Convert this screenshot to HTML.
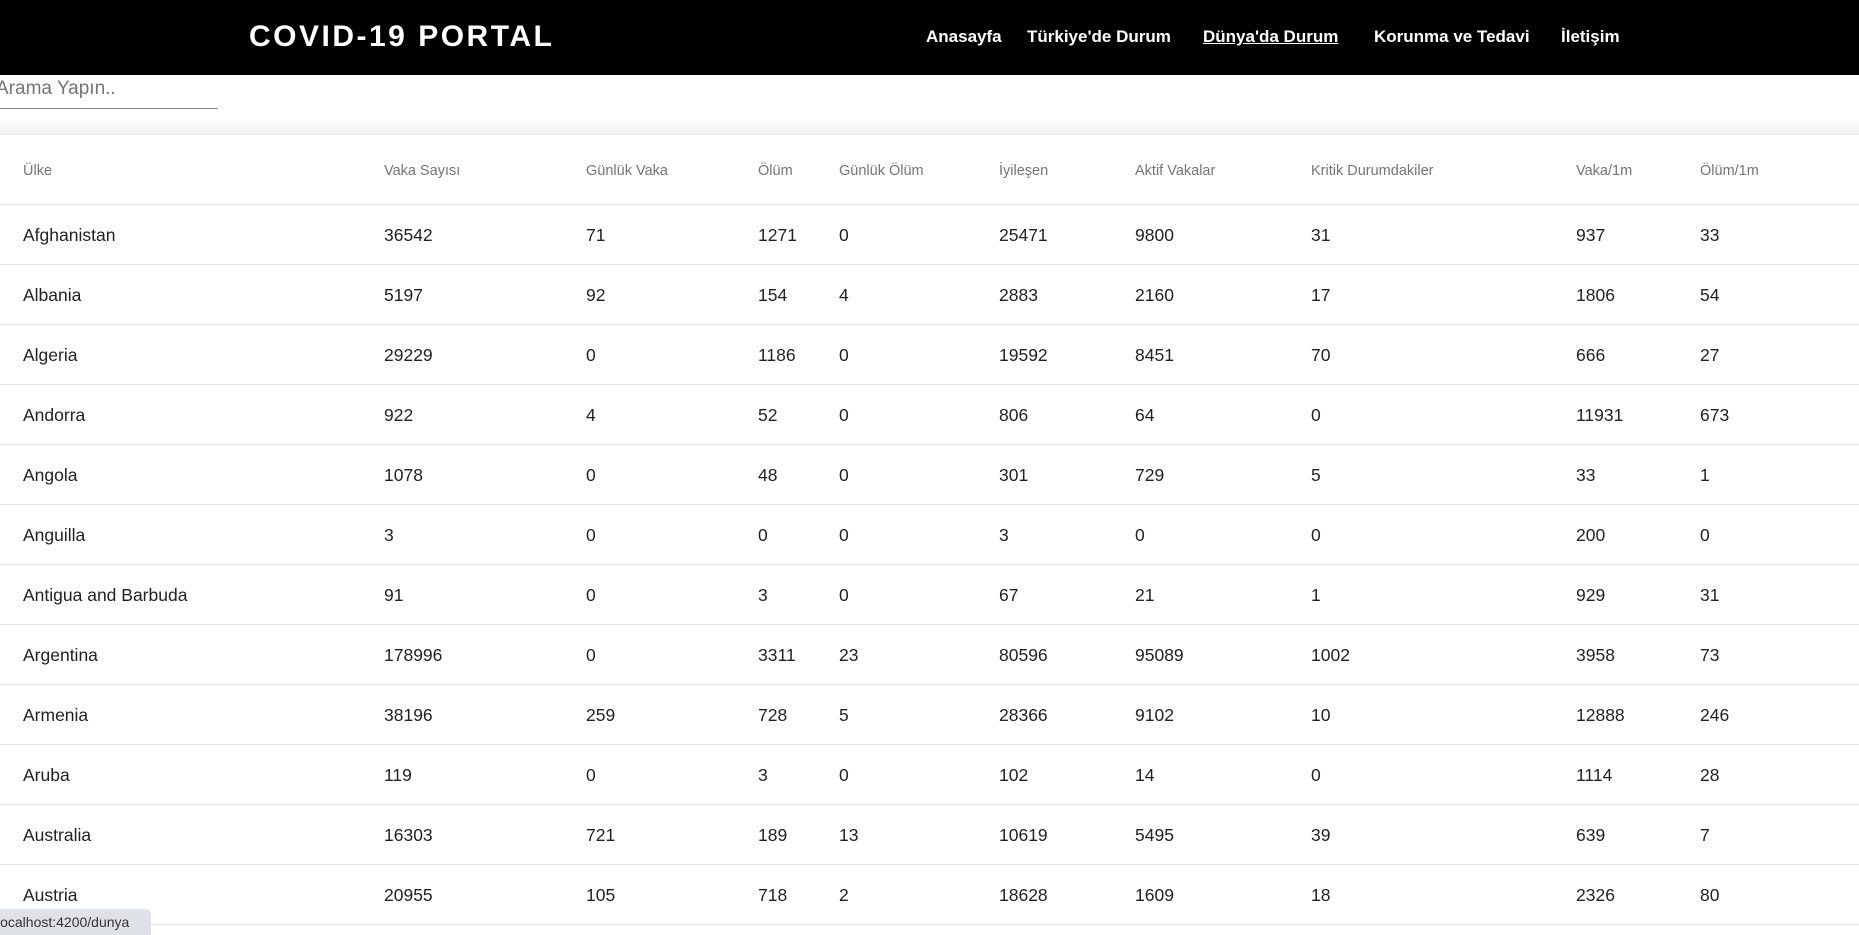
<!DOCTYPE html>
<html><head><meta charset="utf-8"><style>
*{margin:0;padding:0;box-sizing:border-box}
body{width:1859px;height:935px;overflow:hidden;background:#fff;font-family:"Liberation Sans",sans-serif;position:relative}
.hdr{position:absolute;left:0;top:0;width:1859px;height:75px;background:#000}
.title{position:absolute;left:249px;top:20px;color:#fff;font-weight:bold;font-size:30px;letter-spacing:2.5px}
.nav{position:absolute;top:27px;color:#fff;font-weight:bold;font-size:17px;white-space:nowrap}
.search{position:absolute;left:-4px;top:78px;font-size:19px;color:#757575}
.sline{position:absolute;left:0;top:108px;width:218px;height:1px;background:#888}
.shadow{position:absolute;left:0;top:120px;width:1859px;height:15px;background:linear-gradient(#fff,#eee)}
.card{position:absolute;left:0;top:135px;width:1859px;height:800px;background:#fff}
.row{position:absolute;left:0;width:1859px;border-bottom:1px solid #e0e0e0}
.row span{position:absolute;white-space:nowrap}
.h span{font-size:14.5px;color:#757575;top:28px}
.d span{font-size:17.5px;color:#222;top:20px}
.status{position:absolute;left:0;top:909px;width:151px;height:26px;background:#dee1e6;border-top-right-radius:6px;font-size:14px;color:#333;padding:5px 0 0 0;text-indent:-3px;overflow:hidden;white-space:nowrap}
</style></head><body>
<div class="hdr">
<div class="title">COVID-19 PORTAL</div>
<div class="nav" style="left:926px">Anasayfa</div>
<div class="nav" style="left:1027px">Türkiye'de Durum</div>
<div class="nav" style="left:1203px;text-decoration:underline">Dünya'da Durum</div>
<div class="nav" style="left:1374px">Korunma ve Tedavi</div>
<div class="nav" style="left:1561px">İletişim</div>
</div>
<div class="search">Arama Yapın..</div>
<div class="sline"></div>
<div class="shadow"></div>
<div class="card"></div>
<div class="row h" style="top:135px;height:70px">
<span style="left:23px">Ülke</span><span style="left:384px">Vaka Sayısı</span><span style="left:586px">Günlük Vaka</span><span style="left:758px">Ölüm</span><span style="left:839px">Günlük Ölüm</span><span style="left:999px">İyileşen</span><span style="left:1135px">Aktif Vakalar</span><span style="left:1311px">Kritik Durumdakiler</span><span style="left:1576px">Vaka/1m</span><span style="left:1700px">Ölüm/1m</span>
</div>
<div class="row d" style="top:205px;height:60px"><span style="left:23px">Afghanistan</span><span style="left:384px">36542</span><span style="left:586px">71</span><span style="left:758px">1271</span><span style="left:839px">0</span><span style="left:999px">25471</span><span style="left:1135px">9800</span><span style="left:1311px">31</span><span style="left:1576px">937</span><span style="left:1700px">33</span></div>
<div class="row d" style="top:265px;height:60px"><span style="left:23px">Albania</span><span style="left:384px">5197</span><span style="left:586px">92</span><span style="left:758px">154</span><span style="left:839px">4</span><span style="left:999px">2883</span><span style="left:1135px">2160</span><span style="left:1311px">17</span><span style="left:1576px">1806</span><span style="left:1700px">54</span></div>
<div class="row d" style="top:325px;height:60px"><span style="left:23px">Algeria</span><span style="left:384px">29229</span><span style="left:586px">0</span><span style="left:758px">1186</span><span style="left:839px">0</span><span style="left:999px">19592</span><span style="left:1135px">8451</span><span style="left:1311px">70</span><span style="left:1576px">666</span><span style="left:1700px">27</span></div>
<div class="row d" style="top:385px;height:60px"><span style="left:23px">Andorra</span><span style="left:384px">922</span><span style="left:586px">4</span><span style="left:758px">52</span><span style="left:839px">0</span><span style="left:999px">806</span><span style="left:1135px">64</span><span style="left:1311px">0</span><span style="left:1576px">11931</span><span style="left:1700px">673</span></div>
<div class="row d" style="top:445px;height:60px"><span style="left:23px">Angola</span><span style="left:384px">1078</span><span style="left:586px">0</span><span style="left:758px">48</span><span style="left:839px">0</span><span style="left:999px">301</span><span style="left:1135px">729</span><span style="left:1311px">5</span><span style="left:1576px">33</span><span style="left:1700px">1</span></div>
<div class="row d" style="top:505px;height:60px"><span style="left:23px">Anguilla</span><span style="left:384px">3</span><span style="left:586px">0</span><span style="left:758px">0</span><span style="left:839px">0</span><span style="left:999px">3</span><span style="left:1135px">0</span><span style="left:1311px">0</span><span style="left:1576px">200</span><span style="left:1700px">0</span></div>
<div class="row d" style="top:565px;height:60px"><span style="left:23px">Antigua and Barbuda</span><span style="left:384px">91</span><span style="left:586px">0</span><span style="left:758px">3</span><span style="left:839px">0</span><span style="left:999px">67</span><span style="left:1135px">21</span><span style="left:1311px">1</span><span style="left:1576px">929</span><span style="left:1700px">31</span></div>
<div class="row d" style="top:625px;height:60px"><span style="left:23px">Argentina</span><span style="left:384px">178996</span><span style="left:586px">0</span><span style="left:758px">3311</span><span style="left:839px">23</span><span style="left:999px">80596</span><span style="left:1135px">95089</span><span style="left:1311px">1002</span><span style="left:1576px">3958</span><span style="left:1700px">73</span></div>
<div class="row d" style="top:685px;height:60px"><span style="left:23px">Armenia</span><span style="left:384px">38196</span><span style="left:586px">259</span><span style="left:758px">728</span><span style="left:839px">5</span><span style="left:999px">28366</span><span style="left:1135px">9102</span><span style="left:1311px">10</span><span style="left:1576px">12888</span><span style="left:1700px">246</span></div>
<div class="row d" style="top:745px;height:60px"><span style="left:23px">Aruba</span><span style="left:384px">119</span><span style="left:586px">0</span><span style="left:758px">3</span><span style="left:839px">0</span><span style="left:999px">102</span><span style="left:1135px">14</span><span style="left:1311px">0</span><span style="left:1576px">1114</span><span style="left:1700px">28</span></div>
<div class="row d" style="top:805px;height:60px"><span style="left:23px">Australia</span><span style="left:384px">16303</span><span style="left:586px">721</span><span style="left:758px">189</span><span style="left:839px">13</span><span style="left:999px">10619</span><span style="left:1135px">5495</span><span style="left:1311px">39</span><span style="left:1576px">639</span><span style="left:1700px">7</span></div>
<div class="row d" style="top:865px;height:60px"><span style="left:23px">Austria</span><span style="left:384px">20955</span><span style="left:586px">105</span><span style="left:758px">718</span><span style="left:839px">2</span><span style="left:999px">18628</span><span style="left:1135px">1609</span><span style="left:1311px">18</span><span style="left:1576px">2326</span><span style="left:1700px">80</span></div>
<div class="status">localhost:4200/dunya</div>
</body></html>
